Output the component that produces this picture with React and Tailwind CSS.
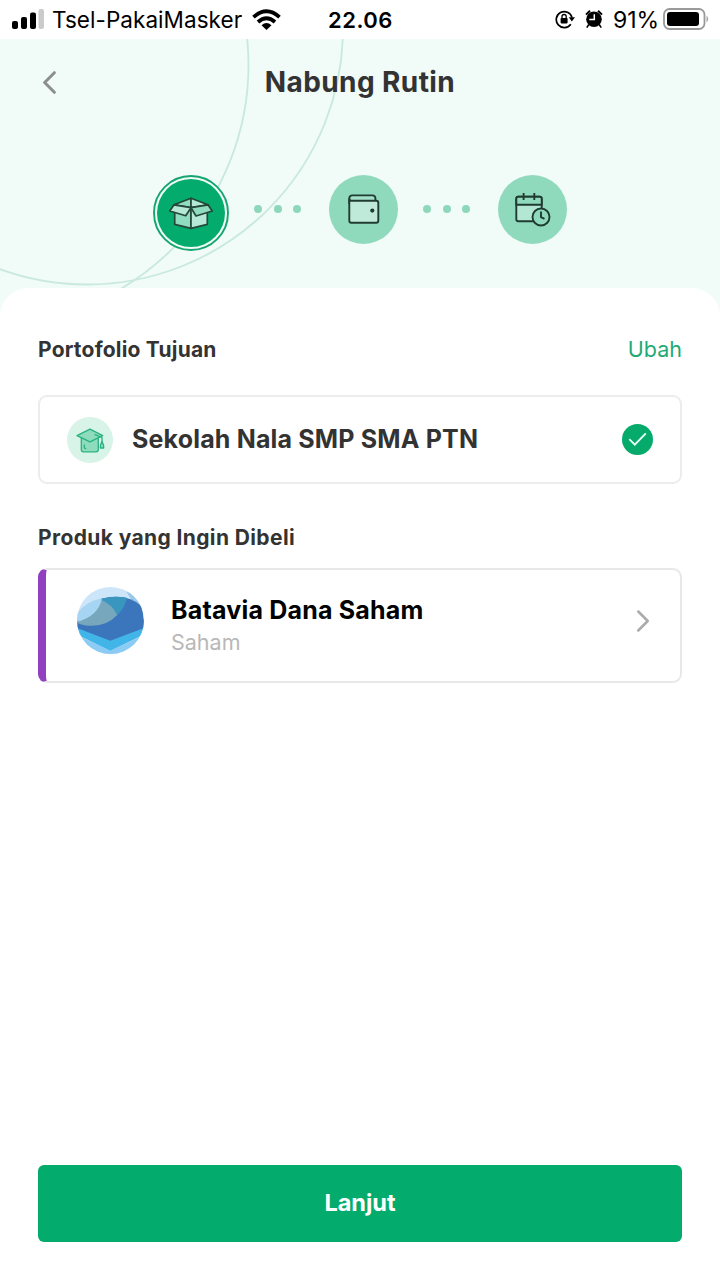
import { ChevronLeft, ChevronRight } from 'lucide-react';

const SignalIcon = () => (
  <svg className="ml-3 mt-2 h-[22px] w-8" viewBox="0 0 32 22">
    <rect x="0" y="13" width="6" height="8" rx="2" />
    <rect x="9" y="9" width="6" height="12" rx="2" />
    <rect x="18" y="4.5" width="6" height="16.5" rx="2" />
    <rect x="26.5" y="1" width="5.5" height="20" rx="2" fill="#cbcbcb" />
  </svg>
);

const WifiIcon = () => (
  <svg className="ml-2.5 mt-[9px] h-[21px] w-[29px]" viewBox="0 0 29 21">
    <g fill="none" stroke="#000" strokeWidth="3.8">
      <path d="M1.5 8.2Q14.5 -3.6 27.5 8.2" />
      <path d="M6 13Q14.5 5.4 23 13" />
    </g>
    <path d="M9.5 16.2Q14.5 12 19.5 16.2L14.5 21Z" />
  </svg>
);

const RotationLockIcon = () => (
  <svg className="h-5 w-5" viewBox="0 0 20 20">
    <path
      d="M15.8 15.2A8 8 0 1 1 17 8.5"
      fill="none"
      stroke="#000"
      strokeWidth="1.7"
    />
    <path d="M13.8 8.3H20L16.8 12.4Z" />
    <rect x="5.6" y="9" width="7" height="5.4" rx="0.8" />
    <path d="M7 9.5V7.6a2.1 2.1 0 0 1 4.2 0V9.5" fill="none" stroke="#000" strokeWidth="1.3" />
  </svg>
);

const AlarmIcon = () => (
  <svg className="h-5 w-[18px]" viewBox="0 0 18 20">
    <circle cx="9" cy="10.3" r="7.8" />
    <path d="M1 5.6L5 1.8M17 5.6L13 1.8" stroke="#000" strokeWidth="2" />
    <path d="M3.8 15.5L1.8 18.7M14.2 15.5L16.2 18.7" stroke="#000" strokeWidth="1.6" />
    <path d="M9.3 5.2V10.5H4.3" fill="none" stroke="#fff" strokeWidth="1.5" />
  </svg>
);

const BatteryIcon = () => (
  <svg className="h-[22px] w-[46px]" viewBox="0 0 46 22">
    <rect x="1" y="1" width="40.5" height="20" rx="5.5" fill="none" stroke="#9a9a9a" strokeWidth="1.8" />
    <rect x="4" y="4" width="32" height="14" rx="3" />
    <path d="M43.5 7.5Q47 11 43.5 14.5Z" fill="#a5a5a5" />
  </svg>
);

const StatusBar = () => (
  <div className="flex h-[39px] bg-white text-black">
    <div className="flex w-[328px]">
      <SignalIcon />
      <span className="ml-2 mt-1 text-[22.5px] leading-8 tracking-[0.05px]">
        Tsel-PakaiMasker
      </span>
      <WifiIcon />
    </div>
    <span className="mt-1 w-[227px] text-[22px] font-semibold leading-8 tracking-[0.5px]">
      22.06
    </span>
    <div className="flex h-[38px] items-center">
      <RotationLockIcon />
      <span className="ml-2.5 flex">
        <AlarmIcon />
      </span>
      <span className="ml-2.5 mt-px w-[50px] whitespace-nowrap text-[23px] leading-8">
        91%
      </span>
      <BatteryIcon />
    </div>
  </div>
);

const BoxIcon = () => (
  <svg
    className="h-[76px] w-[76px]"
    viewBox="0 0 76 76"
    stroke="#24483a"
    strokeWidth="1.7"
    strokeLinejoin="round"
  >
    <circle cx="38" cy="38" r="37" fill="#f1fbf8" stroke="#16a571" strokeWidth="1.9" />
    <circle cx="38" cy="38" r="34" fill="#03ac6c" stroke="none" />
    <path d="M21.7 30V49.3L38 53.3V32.7Z" fill="#8fdcc0" />
    <path d="M54.3 30V49.3L38 53.3V32.7Z" fill="#b5e8d6" />
    <path d="M38 23.3L21 29.8L38 32.7Z" fill="#8fdcc0" />
    <path d="M38 23.3L55 29.8L38 32.7Z" fill="#b5e8d6" />
    <path d="M21 29.8L16.8 36L32.7 40.7L38 32.7Z" fill="#b5e8d6" />
    <path d="M55 29.8L59.2 36L43 41L38 32.7Z" fill="#8fdcc0" />
  </svg>
);

const WalletIcon = () => (
  <svg className="h-[69px] w-[69px]" viewBox="0 0 69 69" stroke="#203c32" strokeWidth="1.9">
    <path d="M20.3 29V23.2A3 3 0 0 1 23.3 20.4H43.6A2.8 2.8 0 0 1 46.4 23.2V25.7" fill="#a4e1cb" />
    <path
      d="M20.3 24.5V45.7A2 2 0 0 0 22.3 47.7H47.3A2 2 0 0 0 49.3 45.7V27.7A2 2 0 0 0 47.3 25.7H22.3Q20.3 25.7 20.3 23.5"
      fill="#bfead9"
    />
    <circle cx="43.3" cy="35.6" r="2.1" fill="#203c32" stroke="none" />
  </svg>
);

const CalendarIcon = () => (
  <svg className="h-[69px] w-[69px]" viewBox="0 0 69 69" fill="none" stroke="#203c32" strokeWidth="1.9">
    <rect x="18.3" y="21.7" width="25.4" height="24.6" rx="2" fill="#b3e6d3" />
    <path d="M18.3 29.7V23.7a2 2 0 0 1 2-2H41.7a2 2 0 0 1 2 2V29.7Z" fill="#8fdabc" />
    <path d="M25.6 18V25M36.3 18V25" />
    <circle cx="43" cy="42" r="8.5" fill="#8fdabc" />
    <path d="M43 36.5V42.2L46.5 43.9" />
  </svg>
);

const Dots = () => (
  <div className="flex w-[47px] justify-between">
    <span className="h-2 w-2 rounded-full bg-[#8dd8bb]" />
    <span className="h-2 w-2 rounded-full bg-[#8dd8bb]" />
    <span className="h-2 w-2 rounded-full bg-[#8dd8bb]" />
  </div>
);

const Header = () => (
  <header className="relative h-[249px] bg-[#f1fbf8]">
    <svg className="absolute inset-0 h-full w-full" viewBox="0 39 720 249" fill="none">
      <circle cx="87" cy="28.5" r="256" stroke="#c8e9dd" strokeWidth="1.8" />
      <circle cx="-11.5" cy="65" r="260" stroke="#c8e9dd" strokeWidth="1.8" />
    </svg>
    <div className="relative flex h-[84px] items-center justify-center">
      <ChevronLeft
        className="absolute left-[30px] top-[24px] h-[39px] w-[39px] text-[#8c8f8e]"
        strokeWidth={1.9}
      />
      <h1 className="pt-px text-[28px] font-bold leading-10 tracking-[0.4px] text-[#333]">Nabung Rutin</h1>
    </div>
    <div className="relative flex pl-[153px] pt-[52px]">
      <BoxIcon />
      <div className="flex h-[68px] items-center pl-[25px] pr-[28px]">
        <Dots />
      </div>
      <div className="h-[69px] w-[69px] rounded-full bg-[#8fdabc]">
        <WalletIcon />
      </div>
      <div className="flex h-[68px] items-center pl-[25px] pr-[28px]">
        <Dots />
      </div>
      <div className="h-[69px] w-[69px] rounded-full bg-[#8fdabc]">
        <CalendarIcon />
      </div>
    </div>
  </header>
);

const GraduationIcon = () => (
  <svg
    className="h-[46px] w-[46px]"
    viewBox="0 0 46 46"
    fill="#8edcbd"
    stroke="#27b27f"
    strokeWidth="1.3"
    strokeLinejoin="round"
    strokeLinecap="round"
  >
    <circle cx="23" cy="23" r="23" fill="#d8f3e7" stroke="none" />
    <path d="M14.3 20V32.5A2.3 2.3 0 0 0 16.6 34.8H29A2.3 2.3 0 0 0 31.3 32.5V20Z" />
    <path d="M10 18.7L23 12.2L35.7 18.7L23 24.8Z" />
    <path d="M28 17.6L35 20.5V24.5" fill="none" />
    <path d="M35 24.5Q33.1 27.5 33.3 31H36.7Q36.9 27.5 35 24.5Z" />
    <path d="M17.3 28V30.3Q17.3 31.7 18.8 31.7" fill="none" />
  </svg>
);

const CheckIcon = () => (
  <svg className="h-[31px] w-[31px]" viewBox="0 0 31 31">
    <circle cx="15.5" cy="15.5" r="15.5" fill="#06ab6c" />
    <path d="M7.3 15.2L12.8 20.7L23.8 9.4" fill="none" stroke="#e9fff6" strokeWidth="1.9" />
  </svg>
);

const BataviaLogo = () => (
  <svg className="h-[67px] w-[67px]" viewBox="0 0 67 67">
    <defs>
      <clipPath id="logo-circle">
        <circle cx="33.5" cy="33.5" r="33.5" />
      </clipPath>
    </defs>
    <g clipPath="url(#logo-circle)">
      <path d="M0 0H67V67H0Z" fill="#cde5f8" />
      <path d="M49 4Q60 8 67 22L54 12Z" fill="#98c8e8" />
      <path d="M-1 35Q12 9.7 39 9.7Q55 9.7 65 19.5L68 42L33.3 55L-1 42Z" fill="#3b76bc" />
      <path d="M22 12.3Q36 8.3 49.7 10.7Q48.5 20 40.3 28Q35 17 22 12.3Z" fill="#3997bf" />
      <path d="M-1 35Q17 29 23.5 12.5Q35 17 40.3 28Q30 38.8 15 38.8Q4 38.8 -1 35Z" fill="#76a7bd" />
      <path d="M-1 28Q9 13.5 25 11.5Q21 30 -1 35Z" fill="#a5d5f3" />
      <path d="M0 67V48L33.3 63.7L67 48V67Z" fill="#8ccbf4" />
      <path d="M-1 40.5L33.3 53.7L68 40.5V47L33.3 63.7L-1 47Z" fill="#41b4e8" />
    </g>
  </svg>
);

export default function App() {
  return (
    <div className="flex h-[1280px] w-[720px] flex-col overflow-hidden bg-[#f1fbf8] font-['Inter','Liberation_Sans',sans-serif]">
      <StatusBar />
      <Header />
      <main className="flex flex-1 flex-col rounded-t-[28px] bg-white px-[38px]">
        <div className="mt-[46px] flex h-8 items-center justify-between">
          <h2 className="text-[21px] font-bold tracking-[0.2px] text-[#333]">Portofolio Tujuan</h2>
          <button className="pb-px text-[21.5px] text-[#1faa75]">Ubah</button>
        </div>

        <div className="mt-[29px] flex h-[89px] items-center rounded-[9px] border-2 border-[#ececec] pl-[27px] pr-[27px]">
          <GraduationIcon />
          <span className="ml-[19px] flex-1 text-[25px] font-bold tracking-[0.17px] text-[#333]">
            Sekolah Nala SMP SMA PTN
          </span>
          <CheckIcon />
        </div>

        <h2 className="mt-[38px] h-8 text-[21px] font-bold leading-8 tracking-[0.38px] text-[#333]">
          Produk yang Ingin Dibeli
        </h2>

        <div className="mt-[14px] flex h-[115px] rounded-[9px] border-2 border-l-8 border-[#e8e8e8] border-l-[#9140c0]">
          <div className="ml-[31px] mt-[17px]">
            <BataviaLogo />
          </div>
          <div className="ml-[27px] mt-6 flex-1">
            <p className="text-[25px] font-bold leading-8 tracking-[0.2px] text-black">Batavia Dana Saham</p>
            <p className="text-[21.5px] leading-8 text-[#b8b8b8]">Saham</p>
          </div>
          <ChevronRight
            className="mr-[18px] mt-8 h-[38px] w-[38px] text-[#ababab]"
            strokeWidth={1.6}
          />
        </div>

        <button className="mb-[38px] mt-auto h-[77px] rounded-[6px] bg-[#03ac6c] pb-0.5 text-[23.5px] font-bold text-white">
          Lanjut
        </button>
      </main>
    </div>
  );
}
